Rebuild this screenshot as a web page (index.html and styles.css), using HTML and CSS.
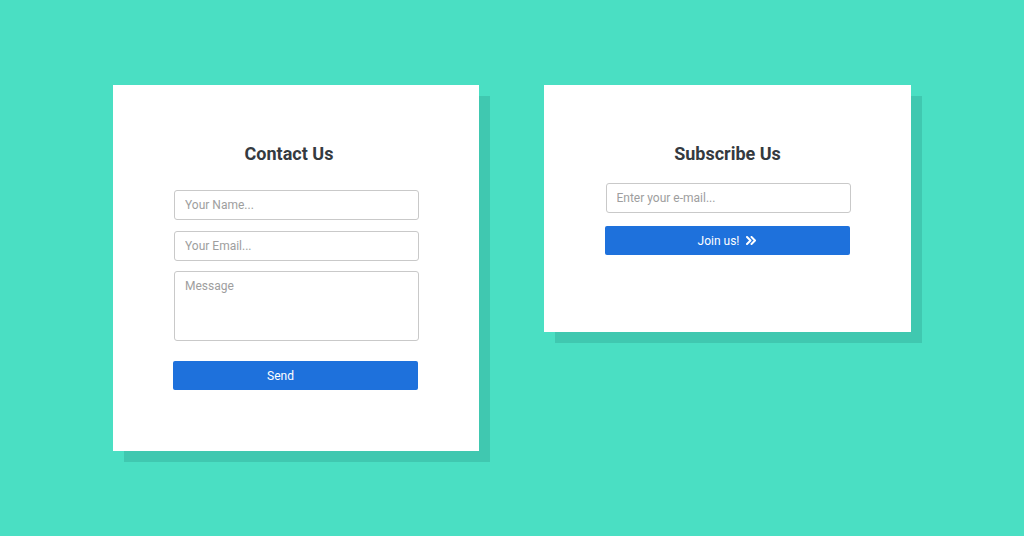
FILE: index.html
```html
<!DOCTYPE html>
<html lang="en">
<head>
<meta charset="utf-8">
<title>Contact & Subscribe</title>
<link rel="stylesheet" href="styles.css">
</head>
<body>
<main class="stage">
  <section class="card card-contact">
    <h2 class="card-title title-contact">Contact Us</h2>
    <form class="form form-contact">
      <input class="field" type="text" placeholder="Your Name...">
      <input class="field field-email" type="email" placeholder="Your Email...">
      <textarea class="field field-message" placeholder="Message"></textarea>
      <button class="btn btn-send" type="button">Send</button>
    </form>
  </section>
  <section class="card card-subscribe">
    <h2 class="card-title">Subscribe Us</h2>
    <form class="form form-subscribe">
      <input class="field" type="email" placeholder="Enter your e-mail...">
      <button class="btn btn-join" type="button">Join us!
        <svg class="chev" viewBox="0 0 10 9" width="10" height="9" aria-hidden="true">
          <polyline points="1,1 4.5,4.5 1,8" fill="none" stroke="#fff" stroke-width="2" stroke-linecap="round" stroke-linejoin="round"/>
          <polyline points="5.5,1 9,4.5 5.5,8" fill="none" stroke="#fff" stroke-width="2" stroke-linecap="round" stroke-linejoin="round"/>
        </svg>
      </button>
    </form>
  </section>
</main>
</body>
</html>
```

FILE: styles.css
```css
* { box-sizing: border-box; }
html, body { margin: 0; padding: 0; }
body {
  width: 1024px;
  height: 536px;
  overflow: hidden;
  background: #4adfc3;
  font-family: Roboto, "Liberation Sans", Arial, sans-serif;
}
.stage {
  display: flex;
  align-items: flex-start;
  gap: 65px;
  padding: 85px 0 0 113px;
}
.card {
  background: #fff;
  width: 366px;
  box-shadow: 11px 11px 0 #40c8b0;
  padding-top: 58px;
  display: flex;
  flex-direction: column;
  align-items: center;
}
.card-contact { height: 366px; }
.card-subscribe { width: 367px; height: 247px; }
.card-title {
  margin: 0;
  font-size: 18px;
  line-height: 22px;
  font-weight: 700;
  color: #343a40;
  text-align: center;
}
.title-contact { padding-right: 14px; }
.form {
  display: flex;
  flex-direction: column;
  width: 245px;
}
.form-contact { margin-top: 25px; margin-left: 1px; }
.form-subscribe { margin-top: 18px; margin-left: 1px; }
.field {
  display: block;
  width: 245px;
  height: 30px;
  margin: 0;
  border: 1px solid #c9c9c9;
  border-radius: 3px;
  padding: 0 10px;
  font-family: inherit;
  font-size: 12px;
  color: #333;
  background: #fff;
  outline: none;
}
.field::placeholder { color: #9e9e9e; }
.field-email { margin-top: 11px; }
.field-message {
  margin-top: 10px;
  height: 70px;
  padding: 7px 10px;
  resize: none;
  line-height: 15px;
}
.btn {
  display: flex;
  align-items: center;
  justify-content: center;
  gap: 7px;
  height: 29px;
  width: 245px;
  border: none;
  border-radius: 2px;
  background: #1e71dc;
  color: #fff;
  font-family: inherit;
  font-size: 12px;
  padding: 0;
  cursor: pointer;
}
.btn-send { margin-top: 20px; margin-left: -1px; padding-right: 30px; }
.btn-join { margin-top: 13px; margin-left: -1px; }
.chev { display: block; }
```
